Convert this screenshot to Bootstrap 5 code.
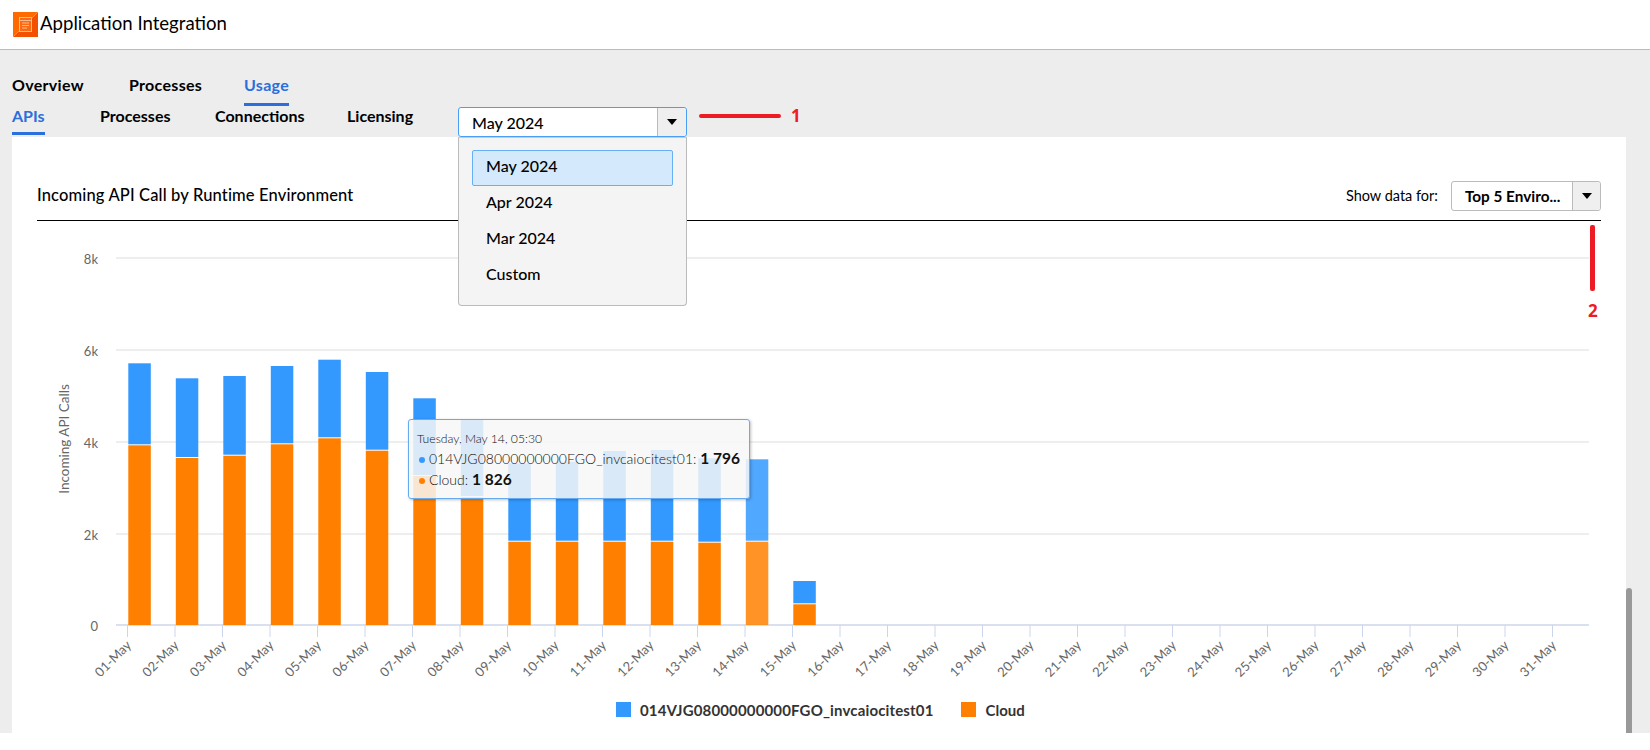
<!DOCTYPE html>
<html lang="en">
<head>
<meta charset="utf-8">
<title>Application Integration</title>
<link href="https://cdn.jsdelivr.net/npm/bootstrap@5.3.0/dist/css/bootstrap.min.css" rel="stylesheet">
<style>
html,body{height:100%;overflow:hidden}
body{font-family:"Lato","Liberation Sans",sans-serif;background:#fff;color:#000;width:1650px;height:750px}
.app-top{height:50px;border-bottom:1px solid #bbb;padding:12px 0 0 13px;gap:2px}
.app-logo{width:25px;height:25px;display:block}
.app-title{font-size:18.6px;line-height:25px;font-weight:400;margin-top:-1px}
.work{height:683px;background:#ededed;padding:0 24px 0 12px}
.tabs-one{padding-top:23px;height:54px;font-weight:700;font-size:16px;letter-spacing:.3px}
.tabs-two{height:33px;font-weight:700;font-size:16px;position:relative;align-items:flex-start}
.tabs-one a,.tabs-two a{color:#000;text-decoration:none;display:inline-block;line-height:19px}
.tabs-one a.tab-on,.tabs-two a.tab-on{color:#2a6fdb;border-bottom:3px solid #2a6fdb}
.tabs-one a.tab-on{height:31px}
.tabs-two a.tab-on{height:29px}
.w117{width:117px}.w115{width:115px}.w88{width:88px}.w132{width:132px}.w111{width:111px}
.pick{width:229px;height:30px;background:#fff;border:1px solid #4a9ef5;border-radius:3px;font-weight:500;font-size:16px}
.tabs-two .pick{margin-top:3px}
.pick-text{flex:1;padding:3px 0 0 13px}
.pick-arrow{width:29px;border-left:1px solid #bbb;background:#efefef;border-radius:0 3px 3px 0}
.tri{width:0;height:0;border-left:5px solid transparent;border-right:5px solid transparent;border-top:6px solid #000}
.pick-menu{left:458px;top:137px;width:229px;height:169px;background:#f4f4f4;border:1px solid #bbb;border-top-color:#ccc;border-radius:0 0 4px 4px;padding:11px 13px;z-index:5;font-size:16px;font-weight:500}
.pick-row{height:36px;padding:5px 14px 0;line-height:22px}
.pick-on{background:#d4e9fb;border:1px solid #66b0f8;border-radius:2px;padding:4px 13px 0;margin-top:1px}
.sheet{height:596px;background:#fff}
.sheet-head{margin:0 25px;height:84px;border-bottom:1px solid #000;padding-bottom:9px}
.sheet-title{font-size:16.5px;font-weight:500;letter-spacing:.15px;margin-bottom:3px}
.show-lab{font-size:14.5px;margin-right:13px}
.pick-small{width:150px;border-color:#bbb;font-weight:700;font-size:15.3px}
.pick-small .pick-arrow{width:28px}
.chart-svg{display:block}
.tip{left:408px;top:419px;width:342px;height:80px;background:rgba(247,247,247,.85);border:1px solid #66aaf0;border-radius:3px;box-shadow:1px 1px 3px rgba(0,0,0,.25);padding:9px 8px;font-size:14px;font-weight:300;color:#111;z-index:3;line-height:20px}
.tip-date{font-size:12.2px;line-height:19px}
.tip b{font-size:15.5px;font-weight:700}
.dot{display:inline-block;width:6px;height:6px;border-radius:50%;margin:0 4px 0 2px;vertical-align:1px}
.dot-blue{background:#3399ff}
.dot-orange{background:#ff8000}
.red-h{left:699px;top:114px;width:82px;height:4px;background:#ed1c24;border-radius:2px;z-index:6}
.red-v{left:1590px;top:225px;width:5px;height:66px;background:#ed1c24;border-radius:2px;z-index:6}
.red-num{color:#ed1c24;font-weight:700;font-size:17px;z-index:6;font-family:"Open Sans",sans-serif}
.num-a{left:791px;top:103px}
.num-b{left:1588px;top:298px}
.scroll-thumb{left:1626px;top:588px;width:6px;height:145px;background:#999;border-radius:3px 3px 0 0;z-index:4}
</style>
</head>
<body>
<header class="app-top d-flex">
<svg class="app-logo" viewBox="0 0 25 25"><rect width="25" height="25" fill="#ff6a00"/><path d="M0 25 25 0V25Z" fill="#f25100"/><path d="M0 25 25 0" stroke="#ff9a5c" stroke-width=".8"/><rect x="6.500" y="5.500" width="12" height="14" fill="#fb6a12" stroke="#ffb98a"/><path d="M6.500 8.500h12M9 11h7M9 13.500h7M9 16h5" stroke="#ffb98a"/></svg>
<div class="app-title">Application Integration</div>
</header>
<main class="work">
<nav class="tabs-one d-flex">
<div class="w117"><a href="#">Overview</a></div>
<div class="w115"><a href="#">Processes</a></div>
<div><a href="#" class="tab-on">Usage</a></div>
</nav>
<nav class="tabs-two d-flex">
<div class="w88"><a href="#" class="tab-on">APIs</a></div>
<div class="w115"><a href="#">Processes</a></div>
<div class="w132"><a href="#">Connections</a></div>
<div class="w111"><a href="#">Licensing</a></div>
<div class="pick d-flex"><div class="pick-text">May 2024</div><div class="pick-arrow d-flex align-items-center justify-content-center"><span class="tri"></span></div></div>
</nav>
<section class="sheet">
<div class="sheet-head d-flex align-items-end justify-content-between">
<div class="sheet-title">Incoming API Call by Runtime Environment</div>
<div class="d-flex align-items-center">
<div class="show-lab">Show data for:</div>
<div class="pick pick-small d-flex"><div class="pick-text">Top 5 Enviro...</div><div class="pick-arrow d-flex align-items-center justify-content-center"><span class="tri"></span></div></div>
</div>
</div>
<svg class="chart-svg" id="chart" width="1614" height="512" viewBox="12 221 1614 512"></svg>
</section>
</main>
<div class="pick-menu position-absolute">
<div class="pick-row pick-on">May 2024</div>
<div class="pick-row">Apr 2024</div>
<div class="pick-row">Mar 2024</div>
<div class="pick-row">Custom</div>
</div>
<div class="tip position-absolute">
<div class="tip-date">Tuesday, May 14, 05:30</div>
<div><span class="dot dot-blue"></span>014VJG08000000000FGO_invcaiocitest01: <b>1 796</b></div>
<div><span class="dot dot-orange"></span>Cloud: <b>1 826</b></div>
</div>
<div class="red-h position-absolute"></div><div class="red-num num-a position-absolute">1</div>
<div class="red-v position-absolute"></div><div class="red-num num-b position-absolute">2</div>
<div class="scroll-thumb position-absolute"></div>
<script>
var blue=[363.3,378.3,376,366,359.7,372,398.3,420,463.3,461.7,451,450,458.3,459.3,581];
var orange=[445.3,458,455.7,444.3,438.3,450.7,476,497,541.7,541.7,541.7,541.7,542.7,541.7,604.3];
var s='',base=625;
[['8k',258],['6k',350],['4k',442],['2k',534]].forEach(function(g){var y=g[1];
s+='<line x1="116" x2="1589" y1="'+y+'" y2="'+y+'" stroke="#e8e8e8" stroke-width="1.500"/>';
s+='<text x="98" y="'+(y+6)+'" text-anchor="end" font-size="13" fill="#666">'+g[0]+'</text>';});
s+='<text x="98" y="631" text-anchor="end" font-size="13" fill="#666">0</text>';
s+='<text transform="translate(69,439) rotate(-90)" text-anchor="middle" font-size="13.500" fill="#666">Incoming API Calls</text>';
s+='<line x1="116" x2="1589" y1="625" y2="625" stroke="#ccd6eb" stroke-width="1.500"/>';
for(var i=0;i<31;i++){var x=127.5+i*47.5;
s+='<line x1="'+x+'" x2="'+x+'" y1="625" y2="637" stroke="#ccd6eb"/>';
var d=(i<9?'0':'')+(i+1)+'-May';
s+='<text transform="translate('+(x+4.5)+',646) rotate(-45)" text-anchor="end" font-size="13" fill="#666">'+d+'</text>';}
blue.forEach(function(b,i){var x=128.3+i*47.5,w=22.5,o=orange[i],op=i==13?' opacity="0.85"':'';
s+='<rect x="'+x+'" y="'+b+'" width="'+w+'" height="'+(o-b-1)+'" fill="#3399ff"'+op+'/>';
s+='<rect x="'+x+'" y="'+o+'" width="'+w+'" height="'+(base-o)+'" fill="#ff8000"'+op+'/>';});
s+='<rect x="616" y="702" width="15" height="15" fill="#3399ff"/><text x="640" y="716" font-size="15" font-weight="700" letter-spacing=".15" fill="#333">014VJG08000000000FGO_invcaiocitest01</text>';
s+='<rect x="961" y="702" width="15" height="15" fill="#ff8000"/><text x="985.500" y="716" font-size="15" font-weight="700" fill="#333">Cloud</text>';
document.getElementById('chart').innerHTML=s;
</script>
<script src="https://cdn.jsdelivr.net/npm/bootstrap@5.3.0/dist/js/bootstrap.bundle.min.js"></script>
</body>
</html>
